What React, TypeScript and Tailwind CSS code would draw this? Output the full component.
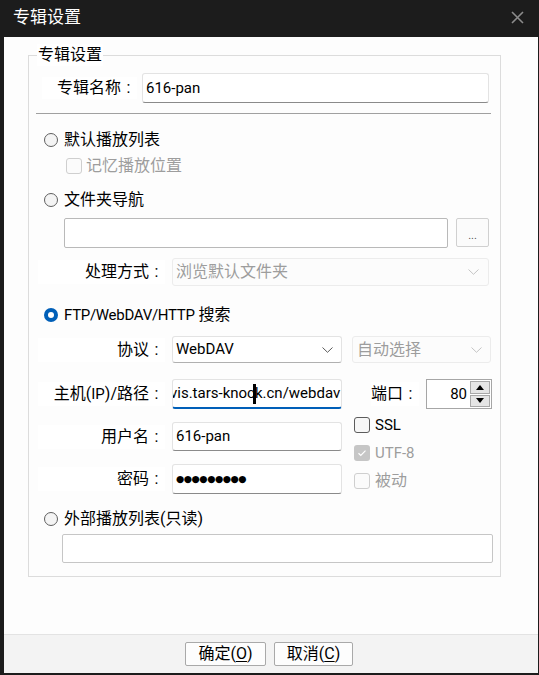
import React from "react";

const L = ({ children }: { children: React.ReactNode }) => (
  <span className="text-[15px]">{children}</span>
);

const Colon = () => <span className="inline-block w-[14px] pl-[1px] text-center">:</span>;

function Radio({ checked }: { checked?: boolean }) {
  if (checked)
    return (
      <span className="w-[14px] h-[14px] rounded-full bg-[#005fb8] flex items-center justify-center shrink-0">
        <span className="w-[6px] h-[6px] rounded-full bg-white" />
      </span>
    );
  return <span className="w-[14px] h-[14px] rounded-full border border-[#5f5f5f] bg-[#f4f4f4] shrink-0" />;
}

function Check({ kind }: { kind: "on" | "off" | "disabled" | "checkedDisabled" }) {
  if (kind === "checkedDisabled")
    return (
      <span className="w-[16px] h-[16px] rounded-[3px] bg-[#c6c6c6] flex items-center justify-center shrink-0">
        <svg width="10" height="8" viewBox="0 0 10 8">
          <path d="M1.5 4.2 L3.8 6.4 L8.5 1.6" fill="none" stroke="#ffffff" strokeWidth="1.2" />
        </svg>
      </span>
    );
  if (kind === "disabled")
    return <span className="w-[16px] h-[16px] rounded-[3px] border border-[#cfcfcf] bg-[#fbfbfb] shrink-0" />;
  return <span className="w-[16px] h-[16px] rounded-[3px] border border-[#5c5c5c] bg-[#f7f7f7] shrink-0" />;
}

function Chevron({ color }: { color: string }) {
  return (
    <svg width="11" height="6" viewBox="0 0 11 6" className="shrink-0">
      <path d="M0.5 0.5 L5.5 5.3 L10.5 0.5" fill="none" stroke={color} strokeWidth="1" />
    </svg>
  );
}

export default function App() {
  return (
    <div className="w-[539px] h-[675px] bg-[#1c1c1c] flex flex-col text-[16px] text-black font-['Roboto','Noto_Sans_CJK_SC',sans-serif] overflow-hidden">
      {/* Title bar */}
      <div className="h-[37px] shrink-0 flex items-center justify-between pl-[13px] pr-[15px] pb-[2px]">
        <span className="text-[17px] text-white leading-none">专辑设置</span>
        <svg width="13" height="13" viewBox="0 0 13 13">
          <path d="M1 1 L12 12 M12 1 L1 12" stroke="#8c8c8c" strokeWidth="1.6" />
        </svg>
      </div>

      {/* Content */}
      <div className="flex-1 ml-[4px] mr-[1px] mb-[2px] bg-[#fdfdfd] flex flex-col">
        <div className="flex-1 pl-[24px] pt-[18px]">
          <div className="relative w-[473px] border border-[#dcdcdc] flex flex-col pb-[13px]">
            <span className="absolute left-[8px] -top-[12px] h-[22px] px-[1px] bg-white leading-[22px]">专辑设置</span>

            {/* 专辑名称 */}
            <div className="mt-[17px] h-[30px] flex items-center">
              <div className="ml-[13px] w-[95px] h-[22px] bg-white flex items-center justify-end leading-none pr-[2px]">
                专辑名称<Colon />
              </div>
              <div className="ml-[5px] w-[347px] h-[30px] rounded-[3px] border border-[#e3e3e3] border-b-[#8a8a8a] bg-white flex items-center pl-[3px]">
                <L>616-pan</L>
              </div>
            </div>

            <div className="mt-[10px] ml-[7px] w-[455px] h-px bg-[#a0a0a0]" />

            {/* 默认播放列表 */}
            <div className="mt-[14px] h-[24px] ml-[15px] flex items-center gap-[6px]">
              <Radio />
              <span>默认播放列表</span>
            </div>
            <div className="mt-[2px] h-[24px] ml-[37px] flex items-center gap-[4px]">
              <Check kind="disabled" />
              <span className="text-[#9d9d9d]">记忆播放位置</span>
            </div>

            {/* 文件夹导航 */}
            <div className="mt-[10px] h-[24px] ml-[15px] flex items-center gap-[6px]">
              <Radio />
              <span>文件夹导航</span>
            </div>
            <div className="mt-[6px] h-[30px] ml-[35px] flex items-start gap-[8px]">
              <div className="w-[384px] h-[30px] rounded-[2px] border border-[#b9b9b9] bg-white" />
              <div className="w-[33px] h-[29px] rounded-[2px] border border-[#d0d0d0] bg-[#fbfbfb] flex items-center justify-center text-[11px] text-[#555] leading-none pt-[5px]">
                ...
              </div>
            </div>

            {/* 处理方式 */}
            <div className="mt-[10px] h-[28px] flex items-center">
              <div className="ml-[9px] w-[127px] h-[24px] bg-white flex items-center justify-end leading-none pr-[2px]">
                处理方式<Colon />
              </div>
              <div className="ml-[7px] w-[317px] h-[28px] rounded-[3px] border border-[#ececec] bg-[#fcfcfc] flex items-center justify-between pl-[3px] pr-[9px] text-[#9d9d9d]">
                <span>浏览默认文件夹</span>
                <Chevron color="#c4c4c4" />
              </div>
            </div>

            {/* FTP */}
            <div className="mt-[17px] h-[24px] ml-[15px] flex items-center gap-[6px]">
              <Radio checked />
              <span>
                <span className="text-[15px] tracking-[-0.3px]">FTP/WebDAV/HTTP</span> 搜索
              </span>
            </div>

            {/* 协议 */}
            <div className="mt-[9px] h-[27px] flex items-center">
              <div className="ml-[9px] w-[127px] h-[24px] bg-white flex items-center justify-end leading-none pr-[2px]">
                协议<Colon />
              </div>
              <div className="ml-[7px] w-[170px] h-[27px] rounded-[3px] border border-[#e3e3e3] border-b-[#b0b0b0] bg-white flex items-center justify-between pl-[3px] pr-[8px]">
                <L>WebDAV</L>
                <Chevron color="#5a5a5a" />
              </div>
              <div className="ml-[10px] w-[139px] h-[27px] rounded-[3px] border border-[#ececec] bg-[#fcfcfc] flex items-center justify-between pl-[4px] pr-[8px] text-[#9d9d9d]">
                <span>自动选择</span>
                <Chevron color="#c4c4c4" />
              </div>
            </div>

            {/* 主机 */}
            <div className="mt-[16px] h-[30px] flex items-center">
              <div className="ml-[9px] w-[127px] h-[24px] bg-white flex items-center justify-end leading-none whitespace-nowrap pr-[2px]">
                主机(<L>IP</L>)/路径<Colon />
              </div>
              <div className="ml-[7px] w-[170px] h-[30px] rounded-[3px] border border-[#e3e3e3] border-b-2 border-b-[#005fb8] bg-white flex items-center overflow-hidden whitespace-nowrap">
                <span className="-ml-[3px] text-[15px]">
                  vis.tars-knoc
                  <span className="inline-block w-[3px] h-[20px] bg-black align-middle -mx-[1.5px]" />
                  k.cn/webdav
                </span>
              </div>
              <div className="ml-[29px] w-[48px] h-[24px] bg-white flex items-center justify-end leading-none pr-[2px]">
                端口<Colon />
              </div>
              <div className="ml-[7px] w-[66px] h-[30px] border border-[#a6a6a6] bg-white flex items-stretch">
                <div className="flex-1 flex items-center justify-end pr-[3px]">
                  <L>80</L>
                </div>
                <div className="w-[21px] flex flex-col gap-px py-[1px] pr-[1px]">
                  <div className="flex-1 bg-[#e5e5e5] border border-[#a8a8a8] flex items-center justify-center">
                    <svg width="8" height="5" viewBox="0 0 8 5">
                      <path d="M0 5 L4 0 L8 5 Z" fill="#000" />
                    </svg>
                  </div>
                  <div className="flex-1 bg-[#e5e5e5] border border-[#a8a8a8] flex items-center justify-center">
                    <svg width="8" height="5" viewBox="0 0 8 5">
                      <path d="M0 0 L8 0 L4 5 Z" fill="#000" />
                    </svg>
                  </div>
                </div>
              </div>
            </div>

            {/* 用户名 / 密码 + checkboxes */}
            <div className="mt-[4px] flex">
              <div className="pt-[9px] flex flex-col">
                <div className="h-[29px] flex items-center">
                  <div className="ml-[9px] w-[127px] h-[24px] bg-white flex items-center justify-end leading-none pr-[2px]">
                    用户名<Colon />
                  </div>
                  <div className="ml-[7px] w-[170px] h-[29px] rounded-[3px] border border-[#e3e3e3] border-b-[#8a8a8a] bg-white flex items-center pl-[3px]">
                    <L>616-pan</L>
                  </div>
                </div>
                <div className="mt-[13px] h-[30px] flex items-center">
                  <div className="ml-[9px] w-[127px] h-[24px] bg-white flex items-center justify-end leading-none pr-[2px]">
                    密码<Colon />
                  </div>
                  <div className="ml-[7px] w-[170px] h-[30px] rounded-[3px] border border-[#e3e3e3] border-b-[#8a8a8a] bg-white flex items-center pl-[3px]">
                    <span className="font-['DejaVu_Sans'] text-[9.5px] tracking-[-0.5px] leading-none">●●●●●●●●●</span>
                  </div>
                </div>
              </div>
              <div className="ml-[12px] flex flex-col">
                <div className="h-[24px] flex items-center gap-[5px]">
                  <Check kind="off" />
                  <L>SSL</L>
                </div>
                <div className="mt-[4px] h-[24px] flex items-center gap-[5px] text-[#9d9d9d]">
                  <Check kind="checkedDisabled" />
                  <L>UTF-8</L>
                </div>
                <div className="mt-[4px] h-[24px] flex items-center gap-[5px] text-[#9d9d9d]">
                  <Check kind="disabled" />
                  <span>被动</span>
                </div>
              </div>
            </div>

            {/* 外部播放列表 */}
            <div className="mt-[13px] h-[24px] ml-[15px] flex items-center gap-[6px]">
              <Radio />
              <span>外部播放列表(只读)</span>
            </div>
            <div className="mt-[3px] ml-[33px] w-[431px] h-[29px] rounded-[2px] border border-[#c6c6c6] bg-white" />
          </div>
        </div>

        {/* Footer */}
        <div className="h-[39px] shrink-0 border-t border-[#e3e3e3] bg-[#f3f3f3] flex pl-[181px] pt-[7px] gap-[8px]">
          <div className="w-[81px] h-[24px] rounded-[2px] border border-[#a9a9a9] bg-[#fdfdfd] flex items-center justify-center leading-none">
            确定(<span className="underline underline-offset-2">O</span>)
          </div>
          <div className="w-[79px] h-[24px] rounded-[2px] border border-[#a9a9a9] bg-[#fdfdfd] flex items-center justify-center leading-none">
            取消(<span className="underline underline-offset-2">C</span>)
          </div>
        </div>
      </div>
    </div>
  );
}
